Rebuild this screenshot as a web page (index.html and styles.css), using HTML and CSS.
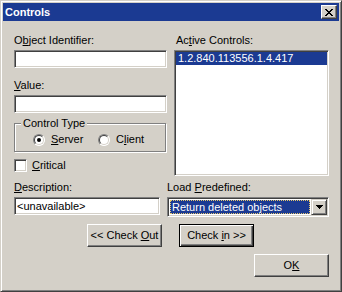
FILE: index.html
```html
<!DOCTYPE html>
<html>
<head>
    <title>Controls</title>
    <link rel="stylesheet" href="styles.css">
</head>
<body>
    <div class="window">
        <div class="titlebar">
            <span class="title">Controls</span>
            <span class="close-btn">
                <svg width="8" height="7" viewBox="0 0 8 7"><path d="M0 0h2v1h-2zM6 0h2v1h-2zM1 1h2v1h-2zM5 1h2v1h-2zM2 2h4v1h-4zM3 3h2v1h-2zM2 4h4v1h-4zM1 5h2v1h-2zM5 5h2v1h-2zM0 6h2v1h-2zM6 6h2v1h-2z" fill="#000"/></svg>
            </span>
        </div>
        <div class="content">
            <div class="top-section">
                <div class="left-col">
                    <label class="field-label">O<u>b</u>ject Identifier:</label>
                    <input type="text" class="field">
                    <label class="field-label spaced"><u>V</u>alue:</label>
                    <input type="text" class="field">
                    <fieldset class="group">
                        <legend>Control Type</legend>
                        <div class="radio-row">
                            <span class="option"><span class="radio checked"></span><span><u>S</u>erver</span></span>
                            <span class="option"><span class="radio"></span><span>C<u>l</u>ient</span></span>
                        </div>
                    </fieldset>
                    <div class="check-row"><span class="checkbox"></span><span><u>C</u>ritical</span></div>
                </div>
                <div class="right-col">
                    <label class="field-label list-label">Ac<u>t</u>ive Controls:</label>
                    <div class="listbox">
                        <div class="list-item selected">1.2.840.113556.1.4.417</div>
                    </div>
                </div>
            </div>

            <div class="desc-row">
                <div class="desc-col">
                    <label class="field-label"><u>D</u>escription:</label>
                    <input type="text" class="field" value="&lt;unavailable&gt;">
                </div>
                <div class="load-col">
                    <label class="field-label">Load <u>P</u>redefined:</label>
                    <div class="combo">
                        <div class="combo-value">Return deleted objects</div>
                        <span class="combo-btn">
                            <svg width="7" height="4" viewBox="0 0 7 4"><path d="M0 0h7v1h-7zM1 1h5v1h-5zM2 2h3v1h-3zM3 3h1v1h-1z" fill="#000"/></svg>
                        </span>
                    </div>
                </div>
            </div>

            <div class="button-row">
                <button class="btn">&lt;&lt; Check <u>O</u>ut</button>
                <button class="btn default">Check <u>i</u>n &gt;&gt;</button>
            </div>
            <div class="ok-row">
                <button class="btn">O<u>K</u></button>
            </div>
        </div>
    </div>
</body>
</html>
```

FILE: styles.css
```css
*, *::before, *::after { box-sizing: border-box; }
body { margin: 0; font-family: "Liberation Sans", Arial, sans-serif; font-size: 11px; line-height: 13px; color: #000; }
u { text-decoration: underline; text-underline-offset: 1px; }

.window { width: 342px; height: 292px; background: #d4d0c8; border: 1px solid; border-color: #d4d0c8 #404040 #404040 #d4d0c8; box-shadow: inset 1px 1px #fff, inset -1px -1px #808080; padding: 2px; }
.titlebar { height: 18px; background: #1b3a92; display: flex; align-items: center; justify-content: space-between; padding: 0 2px; }
.title { color: #fff; font-weight: bold; }
.close-btn { width: 16px; height: 14px; display: flex; align-items: center; justify-content: center; background: #d4d0c8; border: 1px solid; border-color: #fff #404040 #404040 #fff; box-shadow: inset -1px -1px #808080; }

.content { padding: 13px 10px 0 11px; }
.top-section { display: flex; gap: 7px; }
.left-col { width: 153px; }
.right-col { width: 155px; }

.field-label { display: block; height: 13px; }
.field-label.spaced { margin-top: 11px; }
.list-label { padding-left: 2px; }

.field { display: block; width: 100%; height: 18px; margin: 3px 0 0; padding: 0 2px; font: inherit; background: #fff; border: 1px solid; border-color: #808080 #fff #fff #808080; box-shadow: inset 1px 1px #404040, inset -1px -1px #d4d0c8; outline: none; }

.group { width: 152px; margin: 4px 0 0; padding: 3px 0 5px 6px; border: 1px solid #808080; box-shadow: inset 1px 1px #fff, 1px 1px #fff; min-width: 0; }
.group legend { padding: 0 2px; margin: 0; line-height: 13px; background: #d4d0c8; }
.radio-row { display: flex; padding-left: 12px; height: 13px; align-items: center; }
.option { display: flex; align-items: center; gap: 6px; width: 65px; }
.radio { width: 12px; height: 12px; border-radius: 50%; border: 1px solid; border-color: #808080 #fff #fff #808080; background: #fff; position: relative; }
.radio::before { content: ""; position: absolute; inset: 0; border-radius: 50%; border: 1px solid; border-color: #404040 #d4d0c8 #d4d0c8 #404040; }
.radio.checked::after { content: ""; position: absolute; left: 3px; top: 3px; width: 4px; height: 4px; border-radius: 50%; background: #000; }

.check-row { display: flex; align-items: center; gap: 5px; margin-top: 7px; height: 13px; }
.checkbox { width: 13px; height: 13px; background: #fff; border: 1px solid; border-color: #808080 #fff #fff #808080; box-shadow: inset 1px 1px #404040, inset -1px -1px #d4d0c8; }

.listbox { height: 126px; margin-top: 3px; padding: 1px; background: #fff; border: 1px solid; border-color: #808080 #fff #fff #808080; box-shadow: inset 1px 1px #404040, inset -1px -1px #d4d0c8; }
.list-item { height: 13px; padding-left: 2px; white-space: nowrap; }
.list-item.selected { background: #1b3a92; color: #fff; }

.desc-row { display: flex; gap: 7px; margin-top: 5px; }
.desc-col { width: 146px; }
.load-col { width: 162px; }

.combo { display: flex; height: 20px; margin-top: 3px; padding: 1px; background: #fff; border: 1px solid; border-color: #808080 #fff #fff #808080; box-shadow: inset 1px 1px #404040, inset -1px -1px #d4d0c8; }
.combo-value { flex: 1; margin: 1px; padding-left: 2px; line-height: 14px; background: #1b3a92; color: #fff; outline: 1px dotted #e3c56d; outline-offset: -1px; white-space: nowrap; overflow: hidden; }
.combo-btn { width: 16px; height: 16px; display: flex; align-items: center; justify-content: center; background: #d4d0c8; border: 1px solid; border-color: #d4d0c8 #404040 #404040 #d4d0c8; box-shadow: inset 1px 1px #fff, inset -1px -1px #808080; }

.button-row { display: flex; gap: 17px; padding-left: 73px; margin-top: 7px; }
.ok-row { display: flex; justify-content: flex-end; margin-top: 7px; }
.btn { width: 75px; height: 23px; padding: 0; font: inherit; color: #000; background: #d4d0c8; border: 1px solid; border-color: #fff #404040 #404040 #fff; box-shadow: inset -1px -1px #808080, inset 1px 1px #d4d0c8; }
.btn.default { border-color: #000; box-shadow: inset 1px 1px #fff, inset -1px -1px #404040, inset -2px -2px #808080; }
```
